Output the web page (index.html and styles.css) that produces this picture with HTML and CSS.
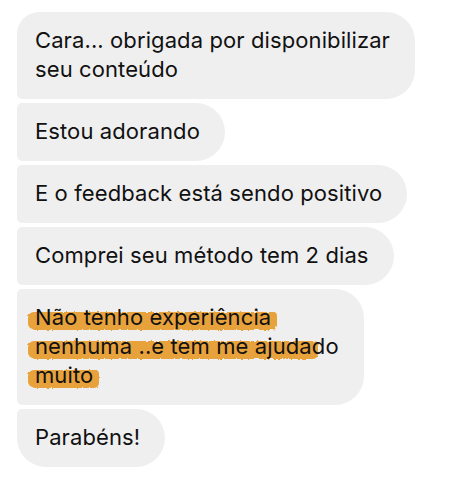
FILE: index.html
```html
<!DOCTYPE html>
<html lang="pt-BR">
<head>
    <meta charset="UTF-8">
    <meta name="viewport" content="width=device-width, initial-scale=1.0">
    <title>Mensagens</title>
    <link rel="stylesheet" href="styles.css">
</head>
<body>
    <svg class="defs" width="0" height="0" aria-hidden="true">
        <filter id="rough">
            <feTurbulence type="fractalNoise" baseFrequency="0.35" numOctaves="2" seed="3"/>
            <feDisplacementMap in="SourceGraphic" scale="3"/>
        </filter>
    </svg>
    <div class="thread">
        <div class="bubble first">Cara... obrigada por disponibilizar<br>seu conteúdo</div>
        <div class="bubble">Estou adorando</div>
        <div class="bubble">E o feedback está sendo positivo</div>
        <div class="bubble">Comprei seu método tem 2 dias</div>
        <div class="bubble">
            <span class="mark">Não tenho experiência</span><br>
            <span class="mark">nenhuma ..e tem me ajuda</span>do<br>
            <span class="mark">muito</span>
        </div>
        <div class="bubble last">Parabéns!</div>
    </div>
</body>
</html>
```

FILE: styles.css
```css
html, body {
    margin: 0;
    padding: 0;
    background-color: #fff;
    font-family: Inter, "Noto Sans", sans-serif;
}

.defs {
    position: absolute;
}

.thread {
    display: flex;
    flex-direction: column;
    align-items: flex-start;
    gap: 4px;
    padding: 12px 0 0 17px;
}

.bubble {
    background-color: #efefef;
    color: #111;
    font-size: 22px;
    letter-spacing: 0.1px;
    line-height: 29px;
    padding: 14px 25px 15px 18px;
    border-radius: 5px 29px 29px 5px;
    isolation: isolate;
}

.bubble.first {
    border-top-left-radius: 22px;
}

.bubble.last {
    border-bottom-left-radius: 29px;
}

/* marker strokes under the highlighted lines */
.mark {
    position: relative;
}

.mark::before {
    content: "";
    position: absolute;
    left: -7px;
    right: -6px;
    top: 8px;
    bottom: 0;
    background-color: #e8a23a;
    border-radius: 6px 4px 5px 7px;
    filter: url(#rough);
    z-index: -1;
}
```
